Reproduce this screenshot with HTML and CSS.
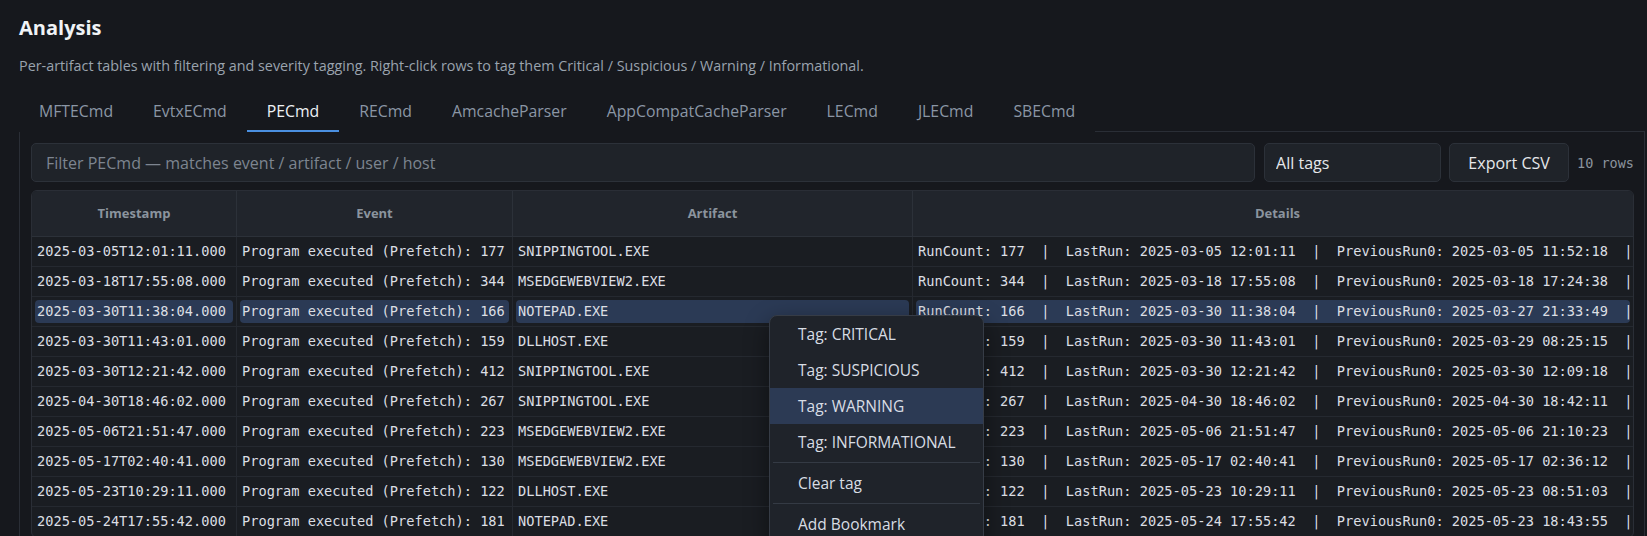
FILE: index.html
```html
<!DOCTYPE html>
<html>
<head>
	<meta charset="utf-8">
	<title>Analysis</title>
	<link rel="stylesheet" href="styles.css">
</head>
<body>
<div class="page">
	<h1 class="title">Analysis</h1>
	<p class="subtitle">Per-artifact tables with filtering and severity tagging. Right-click rows to tag them Critical / Suspicious / Warning / Informational.</p>

	<div class="tabs">
		<div class="tab">MFTECmd</div>
		<div class="tab">EvtxECmd</div>
		<div class="tab active">PECmd</div>
		<div class="tab">RECmd</div>
		<div class="tab">AmcacheParser</div>
		<div class="tab">AppCompatCacheParser</div>
		<div class="tab">LECmd</div>
		<div class="tab">JLECmd</div>
		<div class="tab">SBECmd</div>
		<div class="tab-rest"></div>
	</div>

	<div class="panel">
		<div class="toolbar">
			<input class="filter" type="text" placeholder="Filter PECmd — matches event / artifact / user / host">
			<select class="tag-select"><option>All tags</option></select>
			<button class="btn">Export CSV</button>
			<span class="count">10 rows</span>
		</div>

		<div class="grid">
			<table>
				<colgroup>
					<col class="col-ts">
					<col class="col-ev">
					<col class="col-art">
					<col>
				</colgroup>
				<thead>
					<tr><th>Timestamp</th><th>Event</th><th>Artifact</th><th class="th-details">Details</th></tr>
				</thead>
				<tbody>
					<tr><td><span class="c">2025-03-05T12:01:11.000</span></td><td><span class="c">Program executed (Prefetch): 177</span></td><td><span class="c">SNIPPINGTOOL.EXE</span></td><td><span class="c">RunCount: 177  |  LastRun: 2025-03-05 12:01:11  |  PreviousRun0: 2025-03-05 11:52:18  |</span></td></tr>
					<tr><td><span class="c">2025-03-18T17:55:08.000</span></td><td><span class="c">Program executed (Prefetch): 344</span></td><td><span class="c">MSEDGEWEBVIEW2.EXE</span></td><td><span class="c">RunCount: 344  |  LastRun: 2025-03-18 17:55:08  |  PreviousRun0: 2025-03-18 17:24:38  |</span></td></tr>
					<tr class="sel"><td><span class="c">2025-03-30T11:38:04.000</span></td><td><span class="c">Program executed (Prefetch): 166</span></td><td><span class="c">NOTEPAD.EXE</span></td><td><span class="c">RunCount: 166  |  LastRun: 2025-03-30 11:38:04  |  PreviousRun0: 2025-03-27 21:33:49  |</span></td></tr>
					<tr><td><span class="c">2025-03-30T11:43:01.000</span></td><td><span class="c">Program executed (Prefetch): 159</span></td><td><span class="c">DLLHOST.EXE</span></td><td><span class="c">RunCount: 159  |  LastRun: 2025-03-30 11:43:01  |  PreviousRun0: 2025-03-29 08:25:15  |</span></td></tr>
					<tr><td><span class="c">2025-03-30T12:21:42.000</span></td><td><span class="c">Program executed (Prefetch): 412</span></td><td><span class="c">SNIPPINGTOOL.EXE</span></td><td><span class="c">RunCount: 412  |  LastRun: 2025-03-30 12:21:42  |  PreviousRun0: 2025-03-30 12:09:18  |</span></td></tr>
					<tr><td><span class="c">2025-04-30T18:46:02.000</span></td><td><span class="c">Program executed (Prefetch): 267</span></td><td><span class="c">SNIPPINGTOOL.EXE</span></td><td><span class="c">RunCount: 267  |  LastRun: 2025-04-30 18:46:02  |  PreviousRun0: 2025-04-30 18:42:11  |</span></td></tr>
					<tr><td><span class="c">2025-05-06T21:51:47.000</span></td><td><span class="c">Program executed (Prefetch): 223</span></td><td><span class="c">MSEDGEWEBVIEW2.EXE</span></td><td><span class="c">RunCount: 223  |  LastRun: 2025-05-06 21:51:47  |  PreviousRun0: 2025-05-06 21:10:23  |</span></td></tr>
					<tr><td><span class="c">2025-05-17T02:40:41.000</span></td><td><span class="c">Program executed (Prefetch): 130</span></td><td><span class="c">MSEDGEWEBVIEW2.EXE</span></td><td><span class="c">RunCount: 130  |  LastRun: 2025-05-17 02:40:41  |  PreviousRun0: 2025-05-17 02:36:12  |</span></td></tr>
					<tr><td><span class="c">2025-05-23T10:29:11.000</span></td><td><span class="c">Program executed (Prefetch): 122</span></td><td><span class="c">DLLHOST.EXE</span></td><td><span class="c">RunCount: 122  |  LastRun: 2025-05-23 10:29:11  |  PreviousRun0: 2025-05-23 08:51:03  |</span></td></tr>
					<tr><td><span class="c">2025-05-24T17:55:42.000</span></td><td><span class="c">Program executed (Prefetch): 181</span></td><td><span class="c">NOTEPAD.EXE</span></td><td><span class="c">RunCount: 181  |  LastRun: 2025-05-24 17:55:42  |  PreviousRun0: 2025-05-23 18:43:55  |</span></td></tr>
				</tbody>
			</table>
		</div>
	</div>

	<!-- right-click menu, opened on the NOTEPAD row -->
	<ul class="ctx-menu">
		<li>Tag: CRITICAL</li>
		<li>Tag: SUSPICIOUS</li>
		<li class="hover">Tag: WARNING</li>
		<li>Tag: INFORMATIONAL</li>
		<li class="sep"></li>
		<li>Clear tag</li>
		<li class="sep"></li>
		<li>Add Bookmark</li>
	</ul>
</div>
</body>
</html>
```

FILE: styles.css
```css
html, body{
	overflow: hidden;
}
body{
	margin: 0;
	background-color: #16181d;
	color: #e6e8eb;
	font-family: "Open Sans", "Noto Sans", sans-serif;
}
.page{
	position: relative;
	padding: 14px 2px 0 19px;
}

.title{
	margin: 0;
	font-size: 20px;
	line-height: 28px;
	font-weight: 700;
	color: #f0f3f6;
}
.subtitle{
	margin: 14px 0 0;
	font-size: 14.35px;
	line-height: 20px;
	color: #9aa3ae;
}

/* tabs */
.tabs{
	display: flex;
	margin-top: 13px;
}
.tab{
	padding: 11px 20px 8px;
	font-size: 15.8px;
	line-height: 22px;
	color: #8b96a5;
	border-bottom: 2px solid transparent;
}
.tab.active{
	color: #eef1f5;
	border-bottom-color: #4a8fe0;
}
.tab-rest{
	flex: 1;
	border-bottom: 1px solid #2a2e36;
}

.panel{
	border: 1px solid #2a2e36;
	border-top: 0;
	padding: 11px 10px 0 11px;
}

/* toolbar */
.toolbar{
	display: flex;
	align-items: center;
	gap: 8px;
	height: 39px;
}
.filter,
.tag-select,
.btn{
	box-sizing: border-box;
	height: 39px;
	background-color: #1f2329;
	border: 1px solid #2c3139;
	border-radius: 5px;
	color: #e6e8eb;
	font-family: "Open Sans", "Noto Sans", sans-serif;
	outline: none;
}
.filter{
	flex: 1;
	margin-right: 1px;
	padding: 0 14px;
	font-size: 16px;
}
.filter::placeholder{
	color: #7d8590;
}
.tag-select{
	width: 177px;
	padding: 0 11px;
	font-size: 16px;
	appearance: none;
	-webkit-appearance: none;
}
.btn{
	width: 120px;
	padding: 0;
	font-size: 16px;
}
.count{
	font-family: "DejaVu Sans Mono", monospace;
	font-size: 13.5px;
	color: #8b949e;
}

/* table */
.grid{
	margin-top: 8px;
	border: 1px solid #2a2e36;
	border-radius: 6px;
	overflow: hidden;
	background-color: #1a1d22;
}
.grid table{
	width: 100%;
	border-collapse: separate;
	border-spacing: 0;
	table-layout: fixed;
	font-family: "DejaVu Sans Mono", monospace;
	font-size: 13.65px;
	color: #dcdfe4;
}
.col-ts{ width: 205px; }
.col-ev{ width: 276px; }
.col-art{ width: 400px; }

.grid th{
	background-color: #21252c;
	color: #8b949e;
	font-family: "Open Sans", "Noto Sans", sans-serif;
	font-size: 13px;
	font-weight: 700;
	line-height: 45px;
	padding: 0 5px;
	border-bottom: 1px solid #2c3139;
	border-right: 1px solid #2c3139;
}
.grid th.th-details{
	padding-left: 14px;
	border-right: 0;
}
.grid td{
	padding: 3px;
	border-bottom: 1px solid #252930;
	border-right: 1px solid #252930;
	white-space: pre;
}
.grid td:last-child{
	border-right: 0;
}
.grid td .c{
	display: block;
	padding: 0 2px;
	line-height: 23px;
	border-radius: 4px;
}
.grid tr.sel .c{
	background-color: #2b3a55;
}

/* context menu */
.ctx-menu{
	position: absolute;
	left: 769px;
	top: 315px;
	box-sizing: border-box;
	width: 215px;
	margin: 0;
	padding: 0;
	list-style: none;
	background-color: #1f232a;
	border: 1px solid #363c46;
	border-radius: 8px;
	box-shadow: 0 8px 24px rgba(0,0,0,0.45);
	overflow: hidden;
	font-size: 15.5px;
	color: #d8dde4;
}
.ctx-menu li{
	height: 36px;
	line-height: 36px;
	padding: 0 28px;
	white-space: nowrap;
}
.ctx-menu li.hover{
	background-color: #2c3a54;
}
.ctx-menu li.sep{
	height: 1px;
	margin: 2px 3px;
	padding: 0;
	background-color: #343a44;
}
```
